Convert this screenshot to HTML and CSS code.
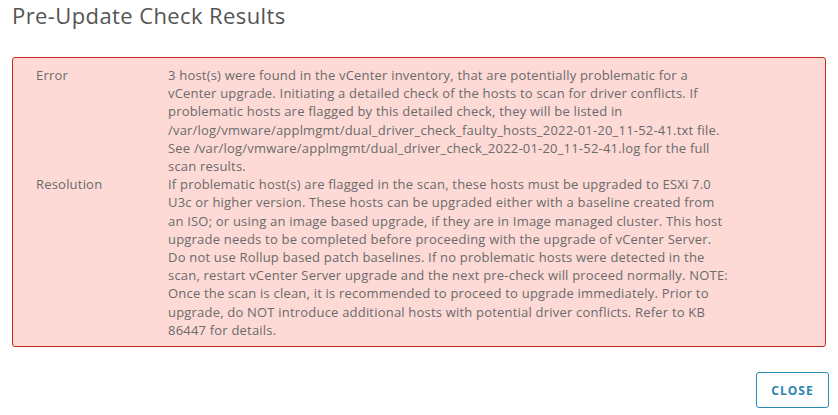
FILE: index.html
```html
<!DOCTYPE html>
<html>
<head>
<meta charset="utf-8">
<link rel="stylesheet" href="styles.css">
</head>
<body>
<div class="modal">
  <h1 class="title">Pre-Update Check Results</h1>
  <div class="alert">
    <div class="row">
      <div class="label">Error</div>
      <div class="text">3 host(s) were found in the vCenter inventory, that are potentially problematic for a<br>vCenter upgrade. Initiating a detailed check of the hosts to scan for driver conflicts. If<br>problematic hosts are flagged by this detailed check, they will be listed in<br>/var/log/vmware/applmgmt/dual_driver_check_faulty_hosts_2022-01-20_11-52-41.txt file.<br>See /var/log/vmware/applmgmt/dual_driver_check_2022-01-20_11-52-41.log for the full<br>scan results.</div>
    </div>
    <div class="row">
      <div class="label">Resolution</div>
      <div class="text">If problematic host(s) are flagged in the scan, these hosts must be upgraded to ESXi 7.0<br>U3c or higher version. These hosts can be upgraded either with a baseline created from<br>an ISO; or using an image based upgrade, if they are in Image managed cluster. This host<br>upgrade needs to be completed before proceeding with the upgrade of vCenter Server.<br>Do not use Rollup based patch baselines. If no problematic hosts were detected in the<br>scan, restart vCenter Server upgrade and the next pre-check will proceed normally. NOTE:<br>Once the scan is clean, it is recommended to proceed to upgrade immediately. Prior to<br>upgrade, do NOT introduce additional hosts with potential driver conflicts. Refer to KB<br>86447 for details.</div>
    </div>
  </div>
  <div class="footer">
    <button class="btn">CLOSE</button>
  </div>
</div>
</body>
</html>
```

FILE: styles.css
```css
html, body {
  margin: 0;
  padding: 0;
  background: #ffffff;
}
.modal {
  width: 838px;
  height: 415px;
  display: flex;
  flex-direction: column;
  font-family: "Open Sans", Lato, sans-serif;
}
.title {
  margin: 0;
  padding: 1px 0 0 12px;
  height: 57px;
  box-sizing: border-box;
  font-size: 22px;
  font-weight: 400;
  letter-spacing: 0.4px;
  line-height: 28px;
  color: #555555;
}
.alert {
  margin: 0 12px;
  height: 290px;
  box-sizing: border-box;
  border: 1px solid #c92a1a;
  border-radius: 3px;
  background: #fddad6;
  padding: 8px 0 0 23px;
  display: flex;
  flex-direction: column;
}
.row {
  display: flex;
}
.label {
  width: 132px;
  flex: none;
  font-size: 13px;
  letter-spacing: 0.2px;
  line-height: 18.2px;
  color: #6b6b6b;
}
.text {
  font-size: 13px;
  letter-spacing: 0.2px;
  line-height: 18.2px;
  color: #6b6b6b;
  white-space: nowrap;
}
.footer {
  display: flex;
  justify-content: flex-end;
  padding: 25px 9px 0 0;
}
.btn {
  width: 73px;
  height: 36px;
  border: 1px solid #2b8ab6;
  border-radius: 3px;
  background: #ffffff;
  color: #2b84ad;
  font-family: "Open Sans", Lato, sans-serif;
  font-size: 12px;
  font-weight: 700;
  letter-spacing: 1px;
  padding: 0;
}
```
